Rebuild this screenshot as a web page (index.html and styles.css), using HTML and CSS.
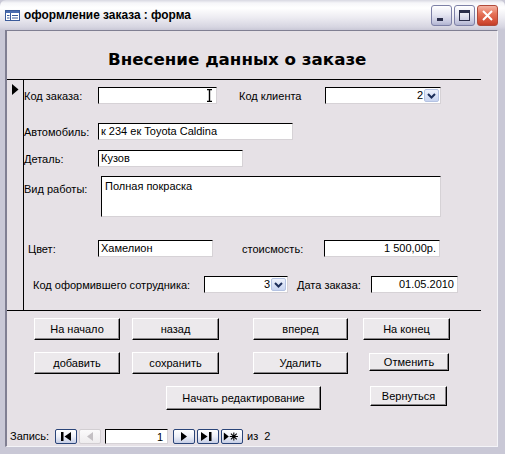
FILE: index.html
```html
<!DOCTYPE html>
<html lang="ru">
<head>
<meta charset="utf-8">
<title>оформление заказа : форма</title>
<link rel="stylesheet" href="styles.css">
</head>
<body>
<div class="window">
  <div class="titlebar">
    <svg class="app-icon" width="15" height="11" viewBox="0 0 15 11">
      <rect x="0.5" y="0.5" width="14" height="10" fill="#fff" stroke="#3a5a9a"/>
      <rect x="1" y="1" width="13" height="2" fill="#4a6cb0"/>
      <line x1="5.5" y1="3" x2="5.5" y2="10" stroke="#3a5a9a"/>
      <line x1="2" y1="5.5" x2="4.5" y2="5.5" stroke="#3a5a9a"/>
      <line x1="2" y1="8" x2="4.5" y2="8" stroke="#3a5a9a"/>
      <line x1="7" y1="5.5" x2="13" y2="5.5" stroke="#3a5a9a"/>
      <line x1="7" y1="8" x2="13" y2="8" stroke="#3a5a9a"/>
    </svg>
    <span class="title">оформление заказа : форма</span>
    <div class="tb-buttons">
      <span class="tb-btn"><svg width="19" height="19" viewBox="0 0 19 19"><rect x="5" y="12" width="6" height="3" fill="#2a2e4a"/></svg></span>
      <span class="tb-btn"><svg width="19" height="19" viewBox="0 0 19 19"><rect x="4.5" y="4.5" width="10" height="10" fill="none" stroke="#2a2e4a"/><rect x="4" y="4" width="11" height="3" fill="#2a2e4a"/></svg></span>
      <span class="tb-btn close"><svg width="19" height="19" viewBox="0 0 19 19"><path d="M5 5 L14 14 M14 5 L5 14" stroke="#fff" stroke-width="2"/></svg></span>
    </div>
  </div>
  <div class="frame">
    <div class="client">
      <div class="form-header">
        <h1>Внесение данных о заказе</h1>
      </div>
      <div class="detail">
        <div class="selector">
          <svg width="7" height="11" viewBox="0 0 7 11"><path d="M0 0 L6.5 5.5 L0 11 Z" fill="#000"/></svg>
        </div>
        <div class="fields">
          <div class="row r1">
            <span class="lbl w74">Код заказа:</span>
            <span class="tb w119 cursor-box"><svg class="ibeam" width="5" height="13" viewBox="0 0 5 13"><path d="M0 0.5 H5 M0 12.5 H5 M2.5 0 V13" stroke="#000" stroke-width="1.4"/></svg></span>
            <span class="lbl ml22 w86">Код клиента</span>
            <span class="tb combo w116"><span class="val">2</span><span class="dd"><svg width="9" height="6" viewBox="0 0 9 6"><path d="M1 1 L4.5 4.5 L8 1" fill="none" stroke="#1c2e5a" stroke-width="2"/></svg></span></span>
          </div>
          <div class="row r2">
            <span class="lbl w74">Автомобиль:</span>
            <span class="tb w195">к 234 ек Toyota Caldina</span>
          </div>
          <div class="row r3">
            <span class="lbl w74">Деталь:</span>
            <span class="tb w145">Кузов</span>
          </div>
          <div class="row r4">
            <span class="lbl w77 top">Вид работы:</span>
            <span class="tb area w340">Полная покраска</span>
          </div>
          <div class="row r5">
            <span class="lbl w74 pl4">Цвет:</span>
            <span class="tb w115">Хамелион</span>
            <span class="lbl ml29 w82">стоисмость:</span>
            <span class="tb right w116">1 500,00р.</span>
          </div>
          <div class="row r6">
            <span class="lbl w180 pl9">Код оформившего сотрудника:</span>
            <span class="tb combo w84"><span class="val">3</span><span class="dd"><svg width="9" height="6" viewBox="0 0 9 6"><path d="M1 1 L4.5 4.5 L8 1" fill="none" stroke="#1c2e5a" stroke-width="2"/></svg></span></span>
            <span class="lbl ml9 w74">Дата заказа:</span>
            <span class="tb right w87">01.05.2010</span>
          </div>
        </div>
      </div>
      <div class="footer">
        <div class="brow">
          <button class="btn w86">На начало</button>
          <button class="btn w87 ml12">назад</button>
          <button class="btn w95 ml34">вперед</button>
          <button class="btn w87 ml15">На конец</button>
        </div>
        <div class="brow b2">
          <button class="btn w86">добавить</button>
          <button class="btn w87 ml12">сохранить</button>
          <button class="btn w95 ml34">Удалить</button>
          <button class="btn w80 h18 ml21 mt1">Отменить</button>
        </div>
        <div class="brow b3">
          <button class="btn w155 h24 ml132">Начать редактирование</button>
          <button class="btn w77 h20 ml49">Вернуться</button>
        </div>
      </div>
      <div class="navbar">
        <span class="nav-lbl">Запись:</span>
        <span class="nbtn"><svg width="20" height="13" viewBox="0 0 20 13"><rect x="5" y="2" width="2.5" height="9" fill="#000"/><path d="M15 2 L8.5 6.5 L15 11 Z" fill="#000"/></svg></span>
        <span class="nbtn disabled"><svg width="20" height="13" viewBox="0 0 20 13"><path d="M13 2 L7 6.5 L13 11 Z" fill="#c4c0c4"/></svg></span>
        <span class="ntb">1</span>
        <span class="nbtn"><svg width="20" height="13" viewBox="0 0 20 13"><path d="M7 2 L13 6.5 L7 11 Z" fill="#000"/></svg></span>
        <span class="nbtn"><svg width="20" height="13" viewBox="0 0 20 13"><path d="M3 2 L9.5 6.5 L3 11 Z" fill="#000"/><rect x="11" y="2" width="2.5" height="9" fill="#000"/></svg></span>
        <span class="nbtn"><svg width="22" height="13" viewBox="0 0 22 13"><path d="M2 2 L7.5 6.5 L2 11 Z" fill="#000"/><path d="M13 2 V11 M8.5 6.5 H17.5 M9.8 3.3 L16.2 9.7 M16.2 3.3 L9.8 9.7" stroke="#000" stroke-width="1.2"/></svg></span>
        <span class="nav-of">из&nbsp; 2</span>
      </div>
    </div>
  </div>
</div>
</body>
</html>
```

FILE: styles.css
```css
* { box-sizing: border-box; }

body {
  margin: 0;
  font-family: "Liberation Sans", Arial, sans-serif;
  font-size: 11px;
  color: #000;
  background: #fff;
}

.window {
  width: 505px;
  height: 454px;
  background: #c9c8d6;
  display: flex;
  flex-direction: column;
}

.titlebar {
  height: 30px;
  display: flex;
  align-items: center;
  padding-left: 5px;
  background: linear-gradient(#d8d8e2 0px, #f6f6f9 3px, #ffffff 8px, #ecebf1 18px, #d6d5e1 27px, #c9c8d6 30px);
  border-radius: 6px 6px 0 0;
}

.app-icon { margin-top: 1px; }

.title {
  margin-left: 4px;
  font-weight: bold;
  font-size: 11.9px;
  color: #000;
}

.tb-buttons {
  margin-left: auto;
  margin-right: 7px;
  display: flex;
  gap: 2px;
}

.tb-btn {
  width: 21px;
  height: 21px;
  border: 1px solid #7d80a6;
  border-radius: 3px;
  background: linear-gradient(#ffffff, #e6e7f2 45%, #c4c6de 85%, #b0b3d0);
  display: flex;
}

.tb-btn.close {
  border-color: #b04a3a;
  background: linear-gradient(#f4b4a4, #e6745a 40%, #d24c34 85%, #c23e28);
}

.frame {
  flex: 1;
  padding: 0 7px 7px 5px;
  display: flex;
}

.client {
  flex: 1;
  border-style: solid;
  border-width: 1px 1px 1px 2px;
  border-color: #807f92 #f4f4f8 #f4f4f8 #807f92;
  background: #e6e1e6;
  display: flex;
  flex-direction: column;
}

.form-header {
  width: 474px;
  height: 49px;
  border-bottom: 1px solid #000;
  padding: 17px 0 0 101px;
}

h1 {
  margin: 0;
  font-family: "DejaVu Sans", "Liberation Sans", sans-serif;
  font-size: 16.7px;
  line-height: 22px;
  font-weight: bold;
}

.detail {
  width: 474px;
  height: 231px;
  border-bottom: 1px solid #000;
  display: flex;
}

.selector {
  width: 17px;
  border-right: 1px solid #000;
  padding: 4px 0 0 5px;
}

.fields { flex: 1; }

.row {
  display: flex;
  align-items: center;
  height: 17px;
}

.r1 { margin-top: 7px; }
.r2 { margin-top: 19px; }
.r3 { margin-top: 10px; }
.r4 { margin-top: 9px; height: 41px; align-items: flex-start; }
.r5 { margin-top: 23px; }
.r6 { margin-top: 19px; }

.lbl { white-space: nowrap; flex: none; }
.lbl.top { margin-top: 7px; }
.pl4 { padding-left: 4px; }
.pl9 { padding-left: 9px; }

.tb {
  flex: none;
  height: 17px;
  background: #fff;
  border: 1px solid;
  border-color: #000 #d6d2d6 #d6d2d6 #000;
  line-height: 15px;
  padding: 0 2px;
  white-space: nowrap;
  overflow: hidden;
}

.tb.area {
  height: 41px;
  padding: 2px 3px;
}

.tb.right { text-align: right; padding-right: 3px; }

.cursor-box {
  display: flex;
  justify-content: flex-end;
  align-items: center;
  padding-right: 4px;
}

.combo {
  display: flex;
  align-items: center;
  justify-content: flex-end;
  padding: 0 1px 0 2px;
}

.combo .val { padding-right: 1px; }

.dd {
  width: 15px;
  height: 13px;
  border: 1px solid #b4c2e2;
  border-radius: 2px;
  background: linear-gradient(#eef2fc, #c8d4f0);
  display: flex;
  align-items: center;
  justify-content: center;
}

.w74 { width: 74px; }
.w77 { width: 77px; }
.w80 { width: 80px; }
.w82 { width: 82px; }
.w84 { width: 84px; }
.w86 { width: 86px; }
.w87 { width: 87px; }
.w95 { width: 95px; }
.w115 { width: 115px; }
.w116 { width: 116px; }
.w119 { width: 119px; }
.w145 { width: 145px; }
.w155 { width: 155px; }
.w180 { width: 180px; }
.w195 { width: 195px; }
.w340 { width: 340px; }

.ml9 { margin-left: 9px; }
.ml12 { margin-left: 12px; }
.ml15 { margin-left: 15px; }
.ml21 { margin-left: 21px; }
.ml22 { margin-left: 22px; }
.ml29 { margin-left: 29px; }
.ml34 { margin-left: 34px; }
.ml49 { margin-left: 49px; }
.ml132 { margin-left: 132px; }
.mt1 { margin-top: 1px; }

.footer {
  height: 115px;
  padding: 7px 0 0 27px;
}

.brow {
  display: flex;
  align-items: flex-start;
}

.b2 { margin-top: 12px; }
.b3 { margin-top: 12px; }

.btn {
  height: 22px;
  padding: 0;
  font-family: "Liberation Sans", Arial, sans-serif;
  font-size: 11px;
  color: #000;
  background: #ece9ec;
  border: 1px solid;
  border-color: #ffffff #000 #000 #ffffff;
  box-shadow: inset -1px -1px 0 #8a878a;
  border-radius: 0;
}

.h18 { height: 18px; }
.h20 { height: 20px; }
.h24 { height: 24px; }

.navbar {
  height: 20px;
  display: flex;
  align-items: center;
  padding-left: 3px;
}

.nav-lbl { width: 45px; }

.nbtn {
  width: 22px;
  height: 15px;
  border: 1px solid #2a4478;
  border-radius: 2px;
  background: linear-gradient(#ffffff, #eef0f8 50%, #c6cee6);
  display: flex;
  align-items: center;
  justify-content: center;
  margin-right: 2px;
}

.nbtn.disabled {
  border-color: #d2ced2;
  background: linear-gradient(#fbfafb, #eeecee);
  margin-right: 4px;
}

.ntb {
  width: 63px;
  height: 15px;
  background: #fff;
  border: 1px solid;
  border-color: #000 #d6d2d6 #d6d2d6 #000;
  text-align: right;
  padding-right: 4px;
  line-height: 14px;
  margin-right: 5px;
}

.nav-of { margin-left: 2px; }
```
